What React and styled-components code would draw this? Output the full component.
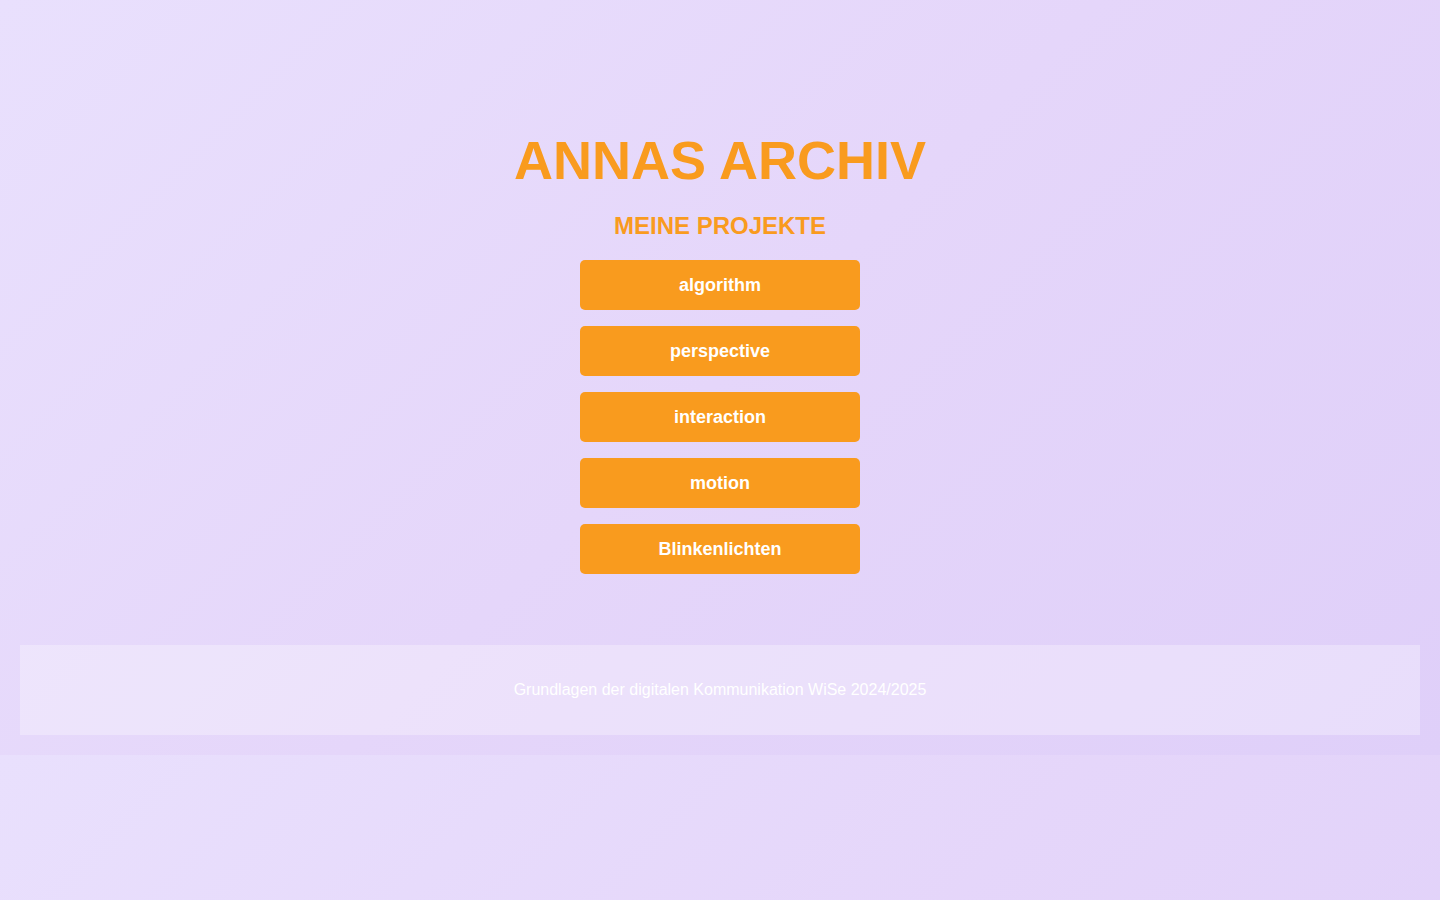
import React from 'react';
import styled, { createGlobalStyle } from 'styled-components';

const projects = ["algorithm", "perspective", "interaction", "motion", "Blinkenlichten"];

const GlobalStyle = createGlobalStyle`
html {
  margin: 0;
}
body {
  margin: 0;
  font-family: "Liberation Sans", Arial, Helvetica, sans-serif;
  background: linear-gradient(135deg, #e9e0fd 0%, #e5d6fa 50%, #dfcff9 100%);
}
`

const Page = styled.div`
padding: 20px;
`

const Main = styled.main`
padding-top: 109px;
display: flex;
flex-direction: column;
align-items: center;
`

const Title = styled.h1`
margin: 0;
font-size: 54px;
line-height: 62px;
font-weight: 700;
color: #f99b1e;
`

const Subtitle = styled.h2`
margin: 21px 0 21px;
font-size: 24px;
line-height: 27px;
font-weight: 700;
color: #f99b1e;
`

const ProjectList = styled.nav`
display: flex;
flex-direction: column;
gap: 16px;
`

const ProjectBtn = styled.a`
display: flex;
align-items: center;
justify-content: center;
width: 280px;
height: 50px;
border-radius: 5px;
background-color: #f99b1e;
color: #ffffff;
font-size: 18px;
font-weight: 700;
text-decoration: none;
cursor: pointer;
`

const Footer = styled.footer`
margin-top: 71px;
padding: 36px 0;
background-color: rgba(255, 255, 255, 0.3);
text-align: center;
color: #ffffff;
font-size: 16px;
line-height: 18px;
`

export default function App() {
  return (
    <Page>
      <GlobalStyle />
      <Main>
        <Title>ANNAS ARCHIV</Title>
        <Subtitle>MEINE PROJEKTE</Subtitle>
        <ProjectList>
          {projects.map(it => (
            <ProjectBtn key={it}>{it}</ProjectBtn>
          ))}
        </ProjectList>
      </Main>
      <Footer>Grundlagen der digitalen Kommunikation WiSe 2024/2025</Footer>
    </Page>
  )
}
